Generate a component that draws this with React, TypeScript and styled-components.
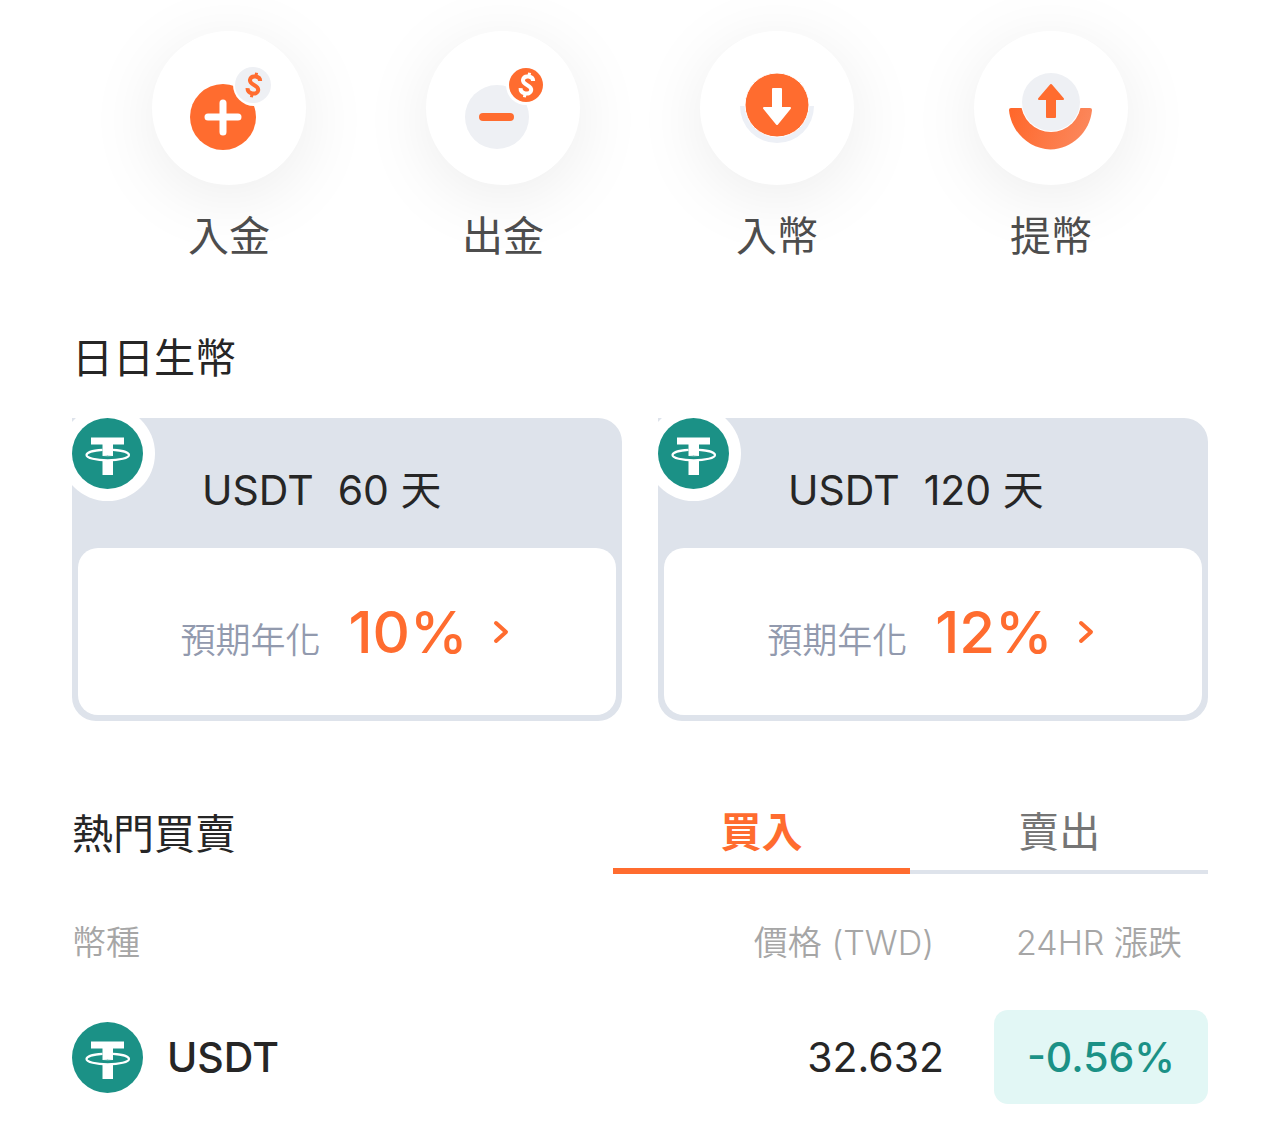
import React, { useState } from "react";
import styled, { createGlobalStyle } from "styled-components";

const ORANGE = "#ff6c2f";
const TEAL = "#1b9186";
const LINE = "#dee3eb";

const GlobalStyle = createGlobalStyle`
  *, *::before, *::after { box-sizing: border-box; }
  body {
    margin: 0;
    background: #fff;
    color: #262626;
    font-family: Inter, "Noto Sans CJK TC", sans-serif;
    font-size: 41px;
    line-height: 48px;
  }
  button { font: inherit; background: none; border: 0; padding: 0; cursor: pointer; }
  h2 { margin: 0; font-size: 41px; line-height: 48px; font-weight: 400; }
`;

const Page = styled.main`
  padding: 31px 72px 20px;
`;

const Actions = styled.nav`
  display: grid;
  grid-template-columns: repeat(4, 1fr);
  padding: 0 20px;
`;

const Action = styled.button`
  display: flex;
  flex-direction: column;
  align-items: center;
  gap: 27px;
  color: #4d4d4d;
`;

const Disc = styled.span`
  display: block;
  width: 154px;
  height: 154px;
  border-radius: 50%;
  background: #fff;
  box-shadow: 0 12px 70px rgba(0, 0, 0, 0.08);
  svg { display: block; }
`;

const Earn = styled.section`
  margin-top: 74px;
`;

const Cards = styled.div`
  display: grid;
  grid-template-columns: repeat(2, 1fr);
  gap: 36px;
  margin-top: 36px;
`;

const Card = styled.button`
  position: relative;
  display: block;
  overflow: hidden;
  padding: 0 6px 6px;
  border-radius: 0 24px 24px 24px;
  background: ${LINE};
  color: #262626;
  text-align: left;
`;

const CardBadge = styled.span`
  position: absolute;
  top: -12px;
  left: -12px;
  padding: 12px;
  border-radius: 50%;
  background: #fff;
  svg { display: block; }
`;

const CardHead = styled.span`
  display: flex;
  align-items: center;
  gap: 24px;
  height: 130px;
  padding: 14px 0 0 124px;
`;

const CardBody = styled.span`
  display: flex;
  align-items: center;
  justify-content: center;
  height: 167px;
  border-radius: 20px;
  background: #fff;
`;

const RateLabel = styled.span`
  margin: 16px 28px 0 0;
  font-size: 35px;
  font-weight: 350;
  color: #929aae;
`;

const Rate = styled.span`
  margin-right: 24px;
  font-size: 58px;
  font-weight: 500;
  color: ${ORANGE};
`;

const Trade = styled.section`
  margin-top: 87px;
`;

const TradeHead = styled.div`
  display: flex;
  justify-content: space-between;
`;

const Tabs = styled.div`
  display: grid;
  grid-template-columns: 1fr 1fr;
  width: 52.4%;
  height: 66px;
  box-shadow: inset 0 -4px ${LINE};
`;

const Tab = styled.button<{ $active: boolean }>`
  padding-bottom: 12px;
  border-bottom: 6px solid ${(p) => (p.$active ? ORANGE : "transparent")};
  color: ${(p) => (p.$active ? ORANGE : "#757575")};
  font-weight: ${(p) => (p.$active ? 700 : 400)};
`;

const TradeTitle = styled.h2`
  padding-top: 2px;
`;

const Quotes = styled.table`
  width: 100%;
  margin-top: 45px;
  border-collapse: collapse;
`;

const HeadCell = styled.th<{ $right?: number }>`
  padding: 0 ${(p) => p.$right ?? 0}px 43px 0;
  font-size: 34px;
  font-weight: 350;
  color: #a6a6a6;
  text-align: ${(p) => (p.$right ? "right" : "left")};
  white-space: nowrap;
`;

const Cell = styled.td`
  padding: 0;
`;

const Coin = styled.div`
  display: flex;
  align-items: center;
  gap: 24px;
  font-weight: 500;
`;

const Price = styled(Cell)`
  padding-right: 50px;
  text-align: right;
`;

const ChangeCell = styled(Cell)`
  width: 214px;
`;

const Change = styled.div`
  padding: 23px 0;
  border-radius: 14px;
  background: #e2f7f5;
  color: ${TEAL};
  font-weight: 500;
  text-align: center;
`;

const DOLLAR = (
  <>
    <path d="M5.2 -5.2C4.6 -8 2.2 -8.8 -0.2 -8.6C-3.2 -8.4 -5 -6.8 -5 -4.4C-5 -1.6 -2.6 -0.8 0 0C2.8 0.8 5.2 1.8 5.2 4.6C5.2 7.2 3 8.6 0 8.6C-3 8.6 -5.2 7.2 -5.6 4.4" />
    <path d="M0 -12.5V-8M0 8V12.5" strokeWidth="3" />
  </>
);

function DepositCash() {
  return (
    <svg width="154" height="154" viewBox="0 0 154 154" fill="none">
      <circle cx="71" cy="86" r="33" fill={ORANGE} />
      <circle cx="102" cy="54" r="21" fill="#fff" />
      <circle cx="101" cy="54" r="18" fill="#eef0f4" />
      <path d="M71 72V101M56 86H86" stroke="#fff" strokeWidth="7" strokeLinecap="round" />
      <g transform="translate(102 54) rotate(12)" stroke={ORANGE} strokeWidth="4">{DOLLAR}</g>
    </svg>
  );
}

function WithdrawCash() {
  return (
    <svg width="154" height="154" viewBox="0 0 154 154" fill="none">
      <circle cx="71" cy="86" r="32" fill="#eef0f4" />
      <circle cx="100" cy="54" r="20" fill="#fff" />
      <circle cx="100" cy="54" r="17" fill={ORANGE} />
      <path d="M57 86H84" stroke={ORANGE} strokeWidth="8" strokeLinecap="round" />
      <g transform="translate(101 54) rotate(12)" stroke="#fff" strokeWidth="4">{DOLLAR}</g>
    </svg>
  );
}

function DepositCoin() {
  return (
    <svg width="154" height="154" viewBox="0 0 154 154" fill="none">
      <path d="M40 75H114A37 37 0 0 1 40 75Z" fill="#edf0f6" />
      <circle cx="77" cy="74" r="32" fill={ORANGE} stroke="#fff" strokeWidth="1" />
      <path d="M73 58H81V77H90L77 93L64 77H73Z" fill="#fff" stroke="#fff" strokeWidth="2" strokeLinejoin="round" />
    </svg>
  );
}

function WithdrawCoin() {
  return (
    <svg width="154" height="154" viewBox="0 0 154 154" fill="none">
      <defs>
        <linearGradient id="tray" x1="36" y1="80" x2="118" y2="110" gradientUnits="userSpaceOnUse">
          <stop stopColor="#ff672a" />
          <stop offset="1" stopColor="#fb8a60" />
        </linearGradient>
      </defs>
      <path d="M37 77H116Q118 77 118 79C116 101 98 118 76.500 118.500C55 118 37 101 35 79Q35 77 37 77Z" fill="url(#tray)" />
      <circle cx="77" cy="71" r="30" fill="#fff" />
      <circle cx="77" cy="71" r="29" fill="#eef0f4" />
      <path d="M77 54L89 68H81V86H73V68H65Z" fill={ORANGE} stroke={ORANGE} strokeWidth="2" strokeLinejoin="round" />
    </svg>
  );
}

function Tether() {
  return (
    <svg width="71" height="71" viewBox="0 0 71 71" fill="none">
      <circle cx="35.500" cy="35.500" r="35.500" fill={TEAL} />
      <path d="M19 19.500H52V26.500H41V37H30.500V26.500H19Z" fill="#fff" />
      <path d="M30.500 42H41V57H30.500Z" fill="#fff" />
      <path d="M30.500 31.800C21 32.300 14.500 34.500 14.500 37C14.500 40 24 42.300 35.700 42.300S57 40 57 37C57 34.500 50.500 32.300 41 31.800" stroke="#fff" strokeWidth="2.2" />
      <path d="M30.500 37.500Q35.700 38 41 37.500" stroke="#fff" strokeWidth="1" />
    </svg>
  );
}

function Chevron() {
  return (
    <svg width="22" height="26" viewBox="0 0 22 26" fill="none">
      <path d="M4 4L14 13L4 22" stroke={ORANGE} strokeWidth="4" strokeLinecap="round" strokeLinejoin="round" />
    </svg>
  );
}

const actions = [
  { label: "入金", icon: <DepositCash /> },
  { label: "出金", icon: <WithdrawCash /> },
  { label: "入幣", icon: <DepositCoin /> },
  { label: "提幣", icon: <WithdrawCoin /> },
];

const plans = [
  { coin: "USDT", term: "60 天", rate: "10%" },
  { coin: "USDT", term: "120 天", rate: "12%" },
];

const tabs = ["買入", "賣出"];

export default function App() {
  const [active, setActive] = useState(0);
  return (
    <>
      <GlobalStyle />
      <Page>
        <Actions>
          {actions.map((a) => (
            <Action key={a.label} type="button">
              <Disc>{a.icon}</Disc>
              <span>{a.label}</span>
            </Action>
          ))}
        </Actions>

        <Earn>
          <h2>日日生幣</h2>
          <Cards>
            {plans.map((p) => (
              <Card key={p.term} type="button">
                <CardBadge><Tether /></CardBadge>
                <CardHead>
                  <span>{p.coin}</span>
                  <span>{p.term}</span>
                </CardHead>
                <CardBody>
                  <RateLabel>預期年化</RateLabel>
                  <Rate>{p.rate}</Rate>
                  <Chevron />
                </CardBody>
              </Card>
            ))}
          </Cards>
        </Earn>

        <Trade>
          <TradeHead>
            <TradeTitle>熱門買賣</TradeTitle>
            <Tabs role="tablist">
              {tabs.map((t, i) => (
                <Tab key={t} type="button" role="tab" aria-selected={active === i} $active={active === i} onClick={() => setActive(i)}>
                  {t}
                </Tab>
              ))}
            </Tabs>
          </TradeHead>
          <Quotes>
            <thead>
              <tr>
                <HeadCell scope="col">幣種</HeadCell>
                <HeadCell scope="col" $right={60}>價格 (TWD)</HeadCell>
                <HeadCell scope="col" $right={26}>24HR 漲跌</HeadCell>
              </tr>
            </thead>
            <tbody>
              <tr>
                <Cell><Coin><Tether />USDT</Coin></Cell>
                <Price>32.632</Price>
                <ChangeCell><Change>-0.56%</Change></ChangeCell>
              </tr>
            </tbody>
          </Quotes>
        </Trade>
      </Page>
    </>
  );
}
